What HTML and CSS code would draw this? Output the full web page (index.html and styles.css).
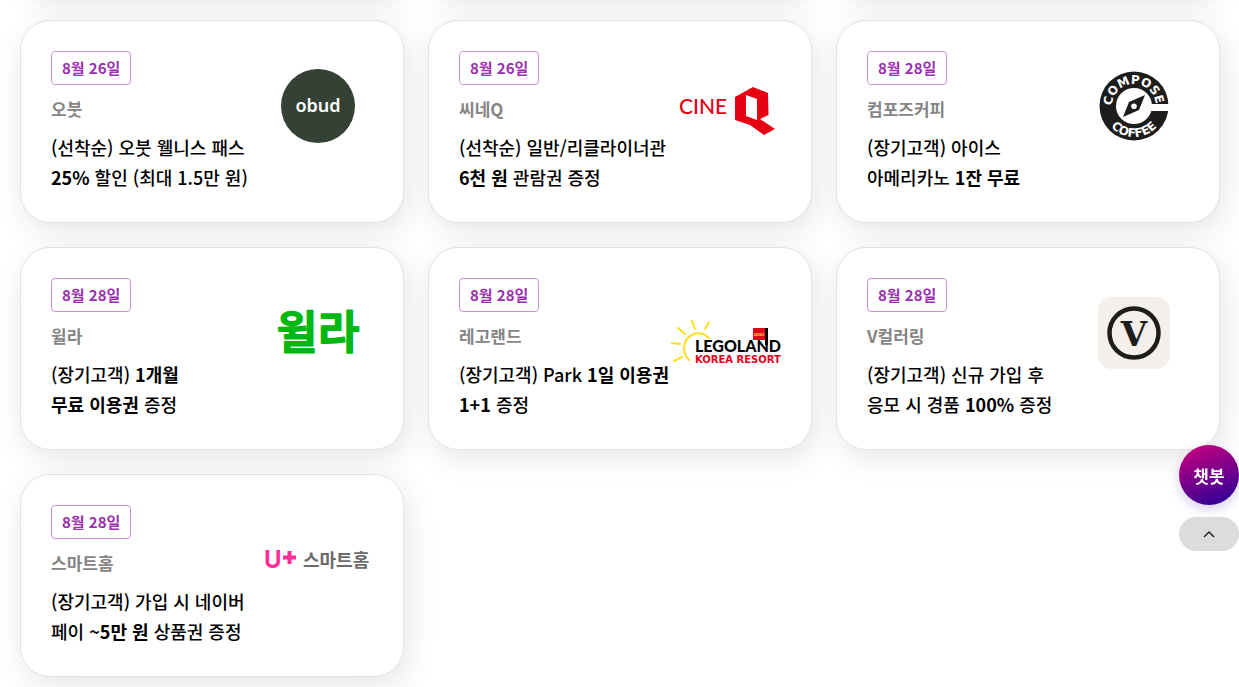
FILE: index.html
```html
<!DOCTYPE html>
<html lang="ko">
<head>
<meta charset="utf-8">
<meta name="viewport" content="width=device-width, initial-scale=1">
<title>멤버십 혜택</title>
<link rel="stylesheet" href="styles.css">
</head>
<body>
<main class="benefits">
  <ul class="card-grid">
    <li class="card card-tail"></li>
    <li class="card card-tail"></li>
    <li class="card card-tail"></li>

    <li class="card">
      <div class="card-text">
        <span class="date">8월 26일</span>
        <p class="brand">오붓</p>
        <p class="offer">(선착순) 오붓 웰니스 패스<br><strong>25%</strong> 할인 (최대 1.5만 원)</p>
      </div>
      <svg class="logo" viewBox="0 0 110 110" role="img" aria-label="obud">
        <circle cx="55" cy="55" r="37" fill="#344134"/>
        <text class="logo-obud" x="55" y="61" text-anchor="middle">obud</text>
      </svg>
    </li>

    <li class="card">
      <div class="card-text">
        <span class="date">8월 26일</span>
        <p class="brand">씨네Q</p>
        <p class="offer">(선착순) 일반/리클라이너관<br><strong>6천 원</strong> 관람권 증정</p>
      </div>
      <svg class="logo" viewBox="0 0 110 110" role="img" aria-label="CINE Q">
        <text class="logo-cine" x="8" y="63">CINE</text>
        <path fill="#e60012" fill-rule="evenodd" d="M82 36 97 42 97.500 64 89 68 104 78 93 84 79 74 64 69V46ZM75 44V65L86 69V48Z"/>
      </svg>
    </li>

    <li class="card">
      <div class="card-text">
        <span class="date">8월 28일</span>
        <p class="brand">컴포즈커피</p>
        <p class="offer">(장기고객) 아이스<br>아메리카노 <strong>1잔 무료</strong></p>
      </div>
      <svg class="logo" viewBox="0 0 110 110" role="img" aria-label="COMPOSE COFFEE">
        <defs>
          <path id="arc-top" d="M34.300 62.500A22 22 0 1 1 75.700 62.500"/>
          <path id="arc-bottom" d="M24 55A31 31 0 0 0 86 55"/>
        </defs>
        <circle cx="55" cy="55" r="34.500" fill="#1d1d1b"/>
        <circle cx="55" cy="55" r="18" fill="#fff"/>
        <path fill="#fff" d="M71 53H90V60H71Z"/>
        <path fill="#1d1d1b" fill-rule="evenodd" d="M66 44 60 59 44 66 50 51ZM55 52.500A2.800 2.800 0 1 0 55 58.100 2.800 2.800 0 0 0 55 52.500Z"/>
        <text class="logo-compose"><textPath href="#arc-top" startOffset="49%" text-anchor="middle">COMPOSE</textPath></text>
        <text class="logo-compose"><textPath href="#arc-bottom" startOffset="50%" text-anchor="middle">COFFEE</textPath></text>
      </svg>
    </li>

    <li class="card">
      <div class="card-text">
        <span class="date">8월 28일</span>
        <p class="brand">윌라</p>
        <p class="offer">(장기고객) <strong>1개월<br>무료 이용권</strong> 증정</p>
      </div>
      <svg class="logo" viewBox="0 0 110 110" role="img" aria-label="윌라">
        <text class="logo-welaaa" x="55" y="71" text-anchor="middle">윌라</text>
      </svg>
    </li>

    <li class="card">
      <div class="card-text">
        <span class="date">8월 28일</span>
        <p class="brand">레고랜드</p>
        <p class="offer">(장기고객) Park <strong>1일 이용권<br>1+1</strong> 증정</p>
      </div>
      <svg class="logo" viewBox="0 0 110 110" role="img" aria-label="LEGOLAND KOREA RESORT">
        <g fill="none" stroke="#ffdf1b" stroke-width="2" stroke-linecap="round">
          <path d="M18 82C10 74 12 60 23 56 29 54 34 56 38 60"/>
          <path d="M1 65 9 66M3 83 11 79M7 50 14 56M21 43 24 51M38 44 34 51"/>
        </g>
        <path fill="#e3001b" d="M82 50H94V62H82Z"/>
        <path fill="#000" d="M94 50H97V67H94Z"/>
        <text class="logo-brick" x="88" y="58" text-anchor="middle">LEGO</text>
        <text class="logo-legoland" x="24" y="74">LEGOLAND</text>
        <text class="logo-resort" x="24" y="85">KOREA RESORT</text>
      </svg>
    </li>

    <li class="card">
      <div class="card-text">
        <span class="date">8월 28일</span>
        <p class="brand">V컬러링</p>
        <p class="offer">(장기고객) 신규 가입 후<br>응모 시 경품 <strong>100%</strong> 증정</p>
      </div>
      <svg class="logo" viewBox="0 0 110 110" role="img" aria-label="V컬러링">
        <rect x="19" y="19" width="72" height="72" rx="14" fill="#f4efeb"/>
        <circle cx="55" cy="55" r="24.500" fill="none" stroke="#1d1d1b" stroke-width="4.500"/>
        <text class="logo-v" x="55" y="68" text-anchor="middle">V</text>
      </svg>
    </li>

    <li class="card">
      <div class="card-text">
        <span class="date">8월 28일</span>
        <p class="brand">스마트홈</p>
        <p class="offer">(장기고객) 가입 시 네이버<br>페이 <strong>~5만 원</strong> 상품권 증정</p>
      </div>
      <svg class="logo" viewBox="0 0 110 110" role="img" aria-label="U+ 스마트홈">
        <text class="logo-uplus" x="1" y="63">U</text>
        <path d="M26.500 46V59M20 52.500H33" fill="none" stroke="#ff2e98" stroke-width="4"/>
        <text class="logo-home" x="40" y="62">스마트홈</text>
      </svg>
    </li>
  </ul>
</main>

<aside class="quick">
  <button class="chatbot" type="button">챗봇</button>
  <button class="to-top" type="button" aria-label="맨 위로">
    <svg class="chevron" viewBox="0 0 12 8" aria-hidden="true"><path d="M1 7 6 2 11 7" fill="none" stroke="#222" stroke-width="1.500"/></svg>
  </button>
</aside>
</body>
</html>
```
FILE: styles.css
```css
* {
  box-sizing: border-box;
}

body {
  margin: 0;
  overflow: hidden;
  background: #fff;
  color: #000;
  font-family: "Noto Sans CJK KR", "Noto Sans", sans-serif;
}

.benefits {
  padding: 0 19px 24px 20px;
}

/* The first row is scrolled out of view, leaving its shadow */
.card-grid {
  display: grid;
  grid-template-columns: repeat(3, minmax(0, 1fr));
  gap: 24px;
  margin: -84px 0 0;
  padding: 0;
  list-style: none;
}

.card {
  display: flex;
  align-items: flex-start;
  justify-content: space-between;
  padding: 30px;
  border: 1px solid #e2e2e2;
  border-radius: 30px;
  background: #fff;
  box-shadow: 4px 8px 30px rgba(0, 0, 0, 0.1);
}

.card-tail {
  min-height: 80px;
}

.card-text {
  flex: 1;
  min-width: 0;
}

.date {
  display: block;
  width: max-content;
  padding: 0 10px;
  border: 1px solid #d08ddb;
  border-radius: 4px;
  color: #9b2fae;
  font-size: 15px;
  font-weight: 700;
  line-height: 32px;
}

.brand {
  margin: 10px 0 0;
  color: #858585;
  font-size: 17px;
  font-weight: 700;
  line-height: 28px;
}

.offer {
  margin: 9px 0 0;
  font-size: 18px;
  font-weight: 500;
  line-height: 30px;
  white-space: nowrap;
}

.offer strong {
  font-weight: 700;
}

.logo {
  flex: none;
  width: 110px;
  height: 110px;
  overflow: visible;
}

.logo-obud {
  fill: #fff;
  font: 600 18px "Noto Sans", sans-serif;
}

.logo-cine {
  fill: #e60012;
  font: 500 21px Lato, sans-serif;
}

.logo-compose {
  fill: #fff;
  font: 700 12px "DejaVu Sans", sans-serif;
}

.logo-welaaa {
  fill: #00b811;
  stroke: #00b811;
  stroke-width: 2;
  stroke-linejoin: round;
  font: 500 45px "Noto Sans CJK KR", sans-serif;
}

.logo-brick {
  fill: #ffe04a;
  font: 900 4px Lato, sans-serif;
}

.logo-legoland {
  fill: #000;
  font: 900 16px Lato, sans-serif;
}

.logo-resort {
  fill: #e3001b;
  font: 700 10px "DejaVu Sans", sans-serif;
}

.logo-v {
  fill: #1d1d1b;
  font: 700 34px "DejaVu Serif", serif;
}

.logo-uplus {
  fill: #ff2e98;
  font: 700 24px Inter, sans-serif;
}

.logo-home {
  fill: #6c6c6c;
  font: 700 18px "Noto Sans CJK KR", sans-serif;
}

.quick {
  position: fixed;
  right: 0;
  bottom: 136px;
  display: flex;
  flex-direction: column;
  gap: 12px;
  width: 60px;
}

.chatbot {
  height: 60px;
  padding: 0;
  border: 0;
  border-radius: 30px;
  background: linear-gradient(160deg, #c6007e 5%, #2b0096 95%);
  box-shadow: 0 4px 12px rgba(60, 0, 150, 0.2);
  color: #fff;
  font: 700 17px "Noto Sans CJK KR", sans-serif;
}

.to-top {
  display: grid;
  place-items: center;
  height: 34px;
  padding: 0;
  border: 0;
  border-radius: 17px;
  background: #dcdcdc;
}

.chevron {
  width: 12px;
  height: 8px;
}
```
